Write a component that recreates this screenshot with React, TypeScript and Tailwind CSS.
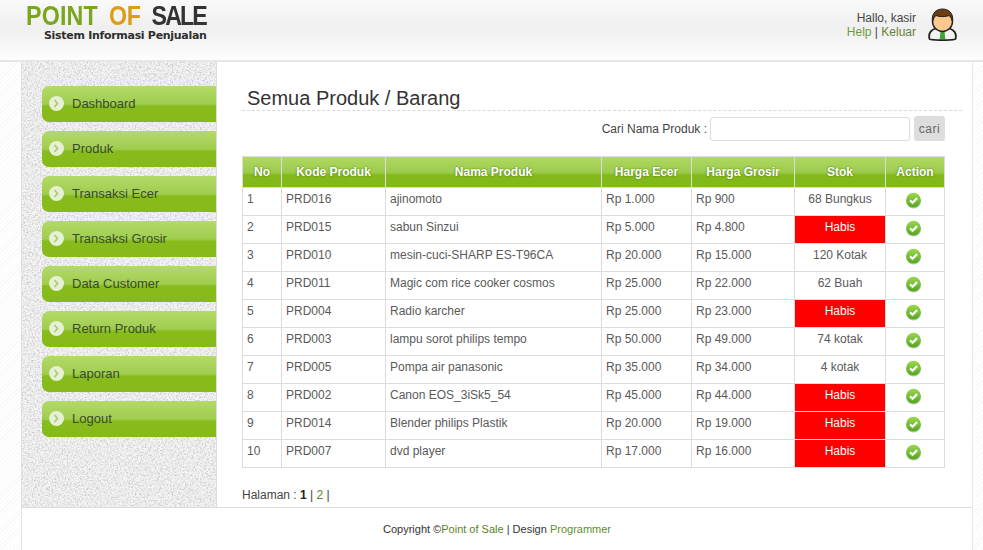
const menus = ["Dashboard", "Produk", "Transaksi Ecer", "Transaksi Grosir", "Data Customer", "Return Produk", "Laporan", "Logout"];

const products = [
  { no: 1, kode: "PRD016", nama: "ajinomoto", ecer: "Rp 1.000", grosir: "Rp 900", stok: "68 Bungkus" },
  { no: 2, kode: "PRD015", nama: "sabun Sinzui", ecer: "Rp 5.000", grosir: "Rp 4.800", stok: "Habis" },
  { no: 3, kode: "PRD010", nama: "mesin-cuci-SHARP ES-T96CA", ecer: "Rp 20.000", grosir: "Rp 15.000", stok: "120 Kotak" },
  { no: 4, kode: "PRD011", nama: "Magic com rice cooker cosmos", ecer: "Rp 25.000", grosir: "Rp 22.000", stok: "62 Buah" },
  { no: 5, kode: "PRD004", nama: "Radio karcher", ecer: "Rp 25.000", grosir: "Rp 23.000", stok: "Habis" },
  { no: 6, kode: "PRD003", nama: "lampu sorot philips tempo", ecer: "Rp 50.000", grosir: "Rp 49.000", stok: "74 kotak" },
  { no: 7, kode: "PRD005", nama: "Pompa air panasonic", ecer: "Rp 35.000", grosir: "Rp 34.000", stok: "4 kotak" },
  { no: 8, kode: "PRD002", nama: "Canon EOS_3iSk5_54", ecer: "Rp 45.000", grosir: "Rp 44.000", stok: "Habis" },
  { no: 9, kode: "PRD014", nama: "Blender philips Plastik", ecer: "Rp 20.000", grosir: "Rp 19.000", stok: "Habis" },
  { no: 10, kode: "PRD007", nama: "dvd player", ecer: "Rp 17.000", grosir: "Rp 16.000", stok: "Habis" },
];

const columns = [
  { label: "No", width: "w-[39px]" },
  { label: "Kode Produk", width: "w-[104px]" },
  { label: "Nama Produk", width: "w-[216px]" },
  { label: "Harga Ecer", width: "w-[90px]" },
  { label: "Harga Grosir", width: "w-[103px]" },
  { label: "Stok", width: "w-[91px]" },
  { label: "Action", width: "w-[59px]" },
];

const CheckIcon = ({ id }: { id: number }) => (
  <svg width="17" height="17" viewBox="0 0 17 17" className="mx-auto block">
    <defs>
      <linearGradient id={`chk${id}`} x1="0" y1="0" x2="0" y2="1">
        <stop offset="0" stopColor="#97d84e" />
        <stop offset="1" stopColor="#55a81e" />
      </linearGradient>
    </defs>
    <ellipse cx="8.5" cy="9.5" rx="7.5" ry="7.2" fill="#9a9a9a" opacity="0.45" />
    <circle cx="8.5" cy="8.2" r="7.4" fill={`url(#chk${id})`} />
    <path d="M5 8.2l2.500 2.500 4.600-4.600" fill="none" stroke="#fff" strokeWidth="2.200" />
  </svg>
);

const Avatar = () => (
  <svg width="29" height="33" viewBox="0 0 29 33">
    <path d="M1.500 31c-1.500-6 2-9.500 6-10.500h14c4 1 7.500 4.500 6 10.500-1 1.500-25 1.500-26 0z" fill="#f2f2f2" stroke="#222" strokeWidth="1.800" />
    <path d="M12.700 21h3.600l1 10h-5.600z" fill="#3fa535" />
    <ellipse cx="14.500" cy="13.500" rx="10" ry="10" fill="#fcc88e" stroke="#222" strokeWidth="1.400" />
    <path d="M4.500 14C3 4.500 9 1 14.500 1S26 4.500 24.500 14c-.8-3-1.500-5-3.500-6.500-3 1.500-10 1.500-13 0-2 1.500-2.700 3.500-3.500 6.500z" fill="#6b3d12" stroke="#222" strokeWidth="1" />
  </svg>
);

const Sidebar = () => (
  <div className="relative w-[195px] shrink-0 overflow-hidden border-r border-[#dcdcdc] bg-[#f4f4f4] pl-[20px] pt-[24px]">
    {/* noise texture */}
    <svg className="absolute inset-0 h-full w-full" aria-hidden="true">
      <filter id="noise" colorInterpolationFilters="sRGB" x="0" y="0" width="100%" height="100%">
        <feTurbulence type="fractalNoise" baseFrequency="0.6" numOctaves="3" seed="4" />
        <feColorMatrix values="0 0 0 0 0.78  0 0 0 0 0.78  0 0 0 0 0.78  1.600 1.600 0 0 -1.400" />
      </filter>
      <rect width="100%" height="100%" filter="url(#noise)" />
    </svg>
    <ul className="relative flex flex-col gap-[9px]">
      {menus.map((m) => (
        <li
          key={m}
          className="flex h-[36px] items-center rounded-l-[7px] bg-[linear-gradient(#b3da68_0%,#a0cd50_50%,#88bc1c_56%,#86ba18_100%)] pb-[1px] pl-[7px] text-[13px] text-[#3a4a2c]"
        >
          <span className="mr-[8px] flex h-[15px] w-[15px] items-center justify-center rounded-full bg-[#e6f0d2]">
            <svg width="7" height="9" viewBox="0 0 7 9">
              <path d="M1.500 1l3 3.500-3 3.500" fill="none" stroke="#a8c878" strokeWidth="1.600" />
            </svg>
          </span>
          {m}
        </li>
      ))}
    </ul>
  </div>
);

const ProductTable = () => (
  <table className="w-[702px] table-fixed border-collapse text-[12px] text-[#5a5a5a]">
    <thead>
      <tr className="h-[31px] bg-[linear-gradient(#b0d964_0%,#9ccb4c_50%,#84b91c_58%,#82b818_100%)]">
        {columns.map((c) => (
          <th
            key={c.label}
            className={`${c.width} border border-[#dcdcdc] p-0 text-center text-[12px] font-bold text-white [text-shadow:0_0_2px_#3d6a06]`}
          >
            {c.label}
          </th>
        ))}
      </tr>
    </thead>
    <tbody>
      {products.map((p) => (
        <tr key={p.no} className="h-[28px]">
          <td className="border border-[#dcdcdc] px-[4px] pb-[6px]">{p.no}</td>
          <td className="border border-[#dcdcdc] px-[4px] pb-[6px]">{p.kode}</td>
          <td className="border border-[#dcdcdc] px-[4px] pb-[6px]">{p.nama}</td>
          <td className="border border-[#dcdcdc] px-[4px] pb-[6px]">{p.ecer}</td>
          <td className="border border-[#dcdcdc] px-[4px] pb-[6px]">{p.grosir}</td>
          {p.stok === "Habis" ? (
            <td className="border border-[#dcdcdc] bg-[#ff0000] pb-[6px] text-center text-white">{p.stok}</td>
          ) : (
            <td className="border border-[#dcdcdc] pb-[6px] text-center">{p.stok}</td>
          )}
          <td className="border border-[#dcdcdc] p-0 pb-[3px] pr-[4px]">
            <CheckIcon id={p.no} />
          </td>
        </tr>
      ))}
    </tbody>
  </table>
);

export default function App() {
  return (
    <div className="flex h-[550px] w-[983px] flex-col overflow-hidden bg-white font-['Liberation_Sans',Arial,sans-serif]">
      {/* header */}
      <div className="flex h-[62px] shrink-0 items-start justify-between border-b-2 border-[#e6e6e6] bg-[linear-gradient(#fafafa_0%,#efefef_45%,#fdfdfd_100%)] pl-[26px] pr-[26px]">
        <div className="pt-[3px]">
          <div className="flex h-[27px] origin-left scale-x-[0.86] gap-[13px] text-[27px] leading-[27px] font-bold whitespace-nowrap">
            <span className="tracking-[0.2px] text-[#7aa61e]">POINT</span>
            <span className="tracking-[-0.5px] text-[#dd9c18]">OF</span>
            <span className="tracking-[-2.200px] text-[#333333]">SALE</span>
          </div>
          <div className="ml-[18px] font-['DejaVu_Sans',sans-serif] text-[11px] leading-[12px] font-bold tracking-[-0.3px] text-[#2e2e2e]">
            Sistem Informasi Penjualan
          </div>
        </div>
        <div className="flex items-start gap-[12px] pt-[8px]">
          <div className="pt-[3px] text-right text-[12px] leading-[14px] text-[#444444]">
            <div>Hallo, kasir</div>
            <div>
              <span className="text-[#6f9a3a]">Help</span> | <span className="text-[#6b7f35]">Keluar</span>
            </div>
          </div>
          <Avatar />
        </div>
      </div>

      {/* body */}
      <div className="flex min-h-0 flex-1">
        <div className="w-[22px] shrink-0 border-r border-[#e0e0e0] bg-[repeating-linear-gradient(135deg,#f8f8f8_0,#f8f8f8_1px,#ffffff_1px,#ffffff_3px)]" />
        <div className="flex w-[950px] shrink-0 flex-col">
          <div className="flex h-[445px] shrink-0">
            <Sidebar />
            <div className="min-w-0 flex-1 pl-[25px] pr-[10px] pt-[24px]">
              <h1 className="h-[25px] border-b border-dashed border-[#d8d8d8] pl-[5px] text-[20px] leading-[24px] font-normal text-[#333333]">
                Semua Produk / Barang
              </h1>
              <div className="mt-[5px] mr-[17px] flex h-[25px] items-center justify-end">
                <span className="mr-[3px] text-[12px] text-[#444444]">Cari Nama Produk :</span>
                <input className="h-[24px] w-[200px] rounded-[3px] border border-[#dcdcdc] bg-white" />
                <button className="ml-[4px] h-[25px] w-[31px] rounded-[3px] bg-[#dddddd] text-[12px] tracking-[0.5px] text-[#666666]">
                  cari
                </button>
              </div>
              <div className="mt-[15px]">
                <ProductTable />
              </div>
              <div className="mt-[20px] text-[12px] leading-[14px] text-[#444444]">
                Halaman : <b className="text-[#222222]">1</b> | <span className="text-[#5d8420]">2</span> |
              </div>
            </div>
          </div>
          <div className="flex flex-1 items-center justify-center border-t border-[#dcdcdc] text-[11px] text-[#333333]">
            <span>
              Copyright ©<span className="text-[#5d7f1e]">Point of Sale</span> | Design{" "}
              <span className="text-[#5d8f2a]">Programmer</span>
            </span>
          </div>
        </div>
        <div className="flex-1 border-l border-[#e8e8e8] bg-[repeating-linear-gradient(135deg,#f8f8f8_0,#f8f8f8_1px,#ffffff_1px,#ffffff_3px)]" />
      </div>
    </div>
  );
}
